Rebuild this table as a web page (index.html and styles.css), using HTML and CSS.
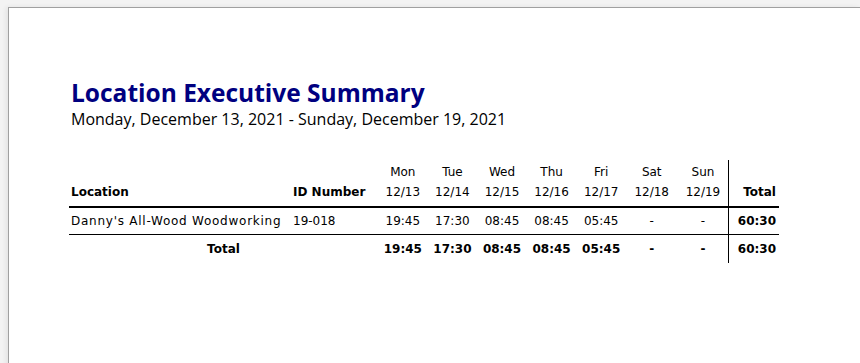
FILE: index.html
```html
<!DOCTYPE html>
<html>
<head>
<meta charset="utf-8">
<link rel="stylesheet" href="styles.css">
</head>
<body>
<div class="sheet">
  <h1 class="title">Location Executive Summary</h1>
  <div class="subtitle">Monday, December 13, 2021 - Sunday, December 19, 2021</div>
  <table class="report">
    <colgroup>
      <col class="c-loc"><col class="c-id">
      <col class="c-day"><col class="c-day"><col class="c-day"><col class="c-day"><col class="c-day">
      <col class="c-we"><col class="c-we"><col class="c-tot">
    </colgroup>
    <thead>
      <tr>
        <th class="left">Location</th>
        <th class="left">ID Number</th>
        <th class="day"><span>Mon</span><span>12/13</span></th>
        <th class="day"><span>Tue</span><span>12/14</span></th>
        <th class="day"><span>Wed</span><span>12/15</span></th>
        <th class="day"><span>Thu</span><span>12/16</span></th>
        <th class="day"><span>Fri</span><span>12/17</span></th>
        <th class="day"><span>Sat</span><span>12/18</span></th>
        <th class="day"><span>Sun</span><span>12/19</span></th>
        <th class="tot">Total</th>
      </tr>
    </thead>
    <tbody>
      <tr class="data">
        <td class="left name">Danny's All-Wood Woodworking</td>
        <td class="left">19-018</td>
        <td>19:45</td><td>17:30</td><td>08:45</td><td>08:45</td><td>05:45</td><td>-</td><td>-</td>
        <td class="tot strong">60:30</td>
      </tr>
      <tr class="sum">
        <td colspan="2" class="strong">Total</td>
        <td class="strong">19:45</td><td class="strong">17:30</td><td class="strong">08:45</td><td class="strong">08:45</td><td class="strong">05:45</td><td class="strong">-</td><td class="strong">-</td>
        <td class="tot strong">60:30</td>
      </tr>
    </tbody>
  </table>
</div>
</body>
</html>
```
FILE: styles.css
```css
html, body {
  margin: 0;
  padding: 0;
  background: #f3f3f3;
  height: 100%;
  overflow: hidden;
}
.sheet {
  margin: 7px 0 0 8px;
  border-top: 1px solid #a0a0a0;
  border-left: 1px solid #a0a0a0;
  background: #ffffff;
  height: 400px;
  padding: 0 0 0 60px;
  box-shadow: -2px 0 5px rgba(0,0,0,0.07);
}
.title {
  margin: 0;
  padding: 70px 0 0 2px;
  font-family: "Open Sans", sans-serif;
  font-weight: 700;
  font-size: 24.5px;
  line-height: 30px;
  color: #000080;
}
.subtitle {
  padding-left: 2px;
  font-family: "Open Sans", sans-serif;
  font-size: 16px;
  line-height: 23px;
  color: #000000;
}
.report {
  margin-top: 29px;
  border-collapse: collapse;
  table-layout: fixed;
  width: 710px;
  font-family: "DejaVu Sans", sans-serif;
  font-size: 12px;
  color: #000;
}
.c-loc { width: 222px; }
.c-id { width: 87px; }
.c-day { width: 49.6px; }
.c-we { width: 51.5px; }
.c-tot { width: 50px; }
.report th, .report td {
  padding: 0;
  text-align: center;
  white-space: nowrap;
}
.report th {
  font-weight: 700;
  vertical-align: bottom;
  height: 47px;
  border-bottom: 2px solid #000;
  line-height: 20px;
  padding-bottom: 4px;
  box-sizing: border-box;
}
.report th.day {
  font-weight: 400;
}
.report th.day span { display: block; }
.report .left {
  text-align: left;
  padding-left: 2px;
}
.report .name {
  letter-spacing: 0.75px;
}
.report .tot {
  text-align: right;
  padding-right: 3px;
  border-left: 1px solid #000;
}
.report .strong { font-weight: 700; }
.data td {
  height: 26px;
  border-bottom: 1px solid #000;
}
.sum td {
  height: 28px;
}
```
